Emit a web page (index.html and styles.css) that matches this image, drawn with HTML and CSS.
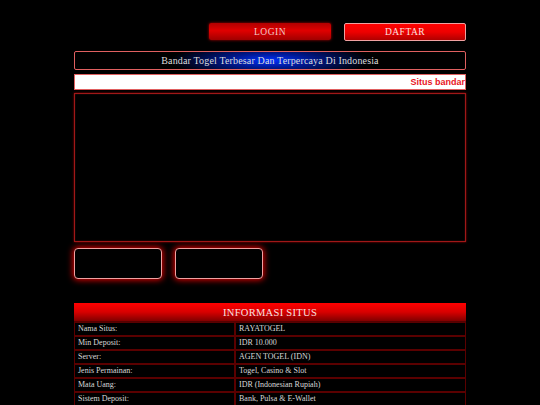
FILE: index.html
```html
<!DOCTYPE html>
<html>
<head>
<meta charset="utf-8">
<link rel="stylesheet" href="styles.css">
</head>
<body>
<div class="page">
  <div class="auth">
    <a class="btn btn-login">LOGIN</a>
    <a class="btn btn-daftar">DAFTAR</a>
  </div>
  <h1 class="tagline">Bandar Togel Terbesar Dan Terpercaya Di Indonesia</h1>
  <div class="marquee"><span class="marquee-text">Situs bandar</span></div>
  <div class="banner"></div>
  <div class="cards">
    <div class="card"></div>
    <div class="card"></div>
  </div>
  <table class="info">
    <colgroup>
      <col class="col-key">
      <col class="col-val">
    </colgroup>
    <thead>
      <tr><th colspan="2">INFORMASI SITUS</th></tr>
    </thead>
    <tbody>
      <tr><td>Nama Situs:</td><td>RAYATOGEL</td></tr>
      <tr><td>Min Deposit:</td><td>IDR 10.000</td></tr>
      <tr><td>Server:</td><td>AGEN TOGEL (IDN)</td></tr>
      <tr><td>Jenis Permainan:</td><td>Togel, Casino &amp; Slot</td></tr>
      <tr><td>Mata Uang:</td><td>IDR (Indonesian Rupiah)</td></tr>
      <tr><td>Sistem Deposit:</td><td>Bank, Pulsa &amp; E-Wallet</td></tr>
    </tbody>
  </table>
</div>
</body>
</html>
```
FILE: styles.css
```css
html, body {
  margin: 0;
  padding: 0;
  background: #000;
  font-family: "Liberation Serif", "Times New Roman", serif;
  color: #ddd;
}
.page {
  width: 392px;
  margin: 0 auto;
  padding-top: 23px;
}
.auth {
  display: flex;
  justify-content: flex-end;
  gap: 13px;
}
.btn {
  width: 122px;
  height: 18px;
  box-sizing: border-box;
  display: flex;
  align-items: center;
  justify-content: center;
  font-size: 9.5px;
  letter-spacing: 0.5px;
  border-radius: 2px;
}
.btn-login {
  height: 17px;
  background: linear-gradient(to bottom, #b00000 0%, #e00000 45%, #a00000 100%);
  box-shadow: 0 0 3px rgba(255,0,0,0.7);
  color: #f0c8c8;
}
.btn-daftar {
  border: 1px solid #f0a0a0;
  background: linear-gradient(to bottom, #ff0000 0%, #ee0000 50%, #b00000 100%);
  color: #fce0e0;
}
.tagline {
  margin: 10px 0 0;
  height: 19px;
  box-sizing: border-box;
  border: 1px solid #e06060;
  border-radius: 2px;
  background: radial-gradient(ellipse 100px 18px at center, #0030ff 0%, #001890 40%, #000 100%);
  font-weight: normal;
  font-size: 10px;
  letter-spacing: 0.15px;
  color: #ddd;
  display: flex;
  align-items: center;
  justify-content: center;
}
.marquee {
  margin-top: 4px;
  height: 16px;
  box-sizing: border-box;
  border: 1px solid #e06060;
  background: #fff;
  display: flex;
  align-items: center;
  justify-content: flex-end;
  overflow: hidden;
}
.marquee-text {
  font-family: "Liberation Sans", Arial, sans-serif;
  font-weight: bold;
  font-size: 9px;
  color: #e8141e;
  white-space: nowrap;
}
.banner {
  margin-top: 3px;
  height: 149px;
  box-sizing: border-box;
  border: 1px solid #a01818;
  box-shadow: 0 0 2px rgba(255,0,0,0.6), inset 0 0 1px rgba(255,80,80,0.6);
  background: #000;
}
.cards {
  margin-top: 6px;
  display: flex;
  gap: 13px;
}
.card {
  width: 88px;
  height: 31px;
  box-sizing: border-box;
  border: 1px solid #f0a0a0;
  border-radius: 4px;
  box-shadow: 0 0 6px 1px rgba(255,0,0,0.9);
  background: #000;
}
.info {
  margin-top: 24px;
  width: 100%;
  border-collapse: separate;
  border-spacing: 0;
  table-layout: fixed;
}
.col-key {
  width: 161px;
}
.info th {
  height: 18px;
  padding: 0;
  font-weight: normal;
  font-size: 10.5px;
  letter-spacing: 0.3px;
  color: #f8e0e0;
  background: linear-gradient(to bottom, #ff0000 0%, #d80000 50%, #800000 100%);
  border-bottom: 1px solid #500;
}
.info td {
  height: 12px;
  padding: 0 0 0 3px;
  font-size: 8px;
  line-height: 12px;
  color: #d8d8d8;
  background: #000;
  border: 1px solid #5a0000;
  vertical-align: middle;
  white-space: nowrap;
  overflow: hidden;
}
```
